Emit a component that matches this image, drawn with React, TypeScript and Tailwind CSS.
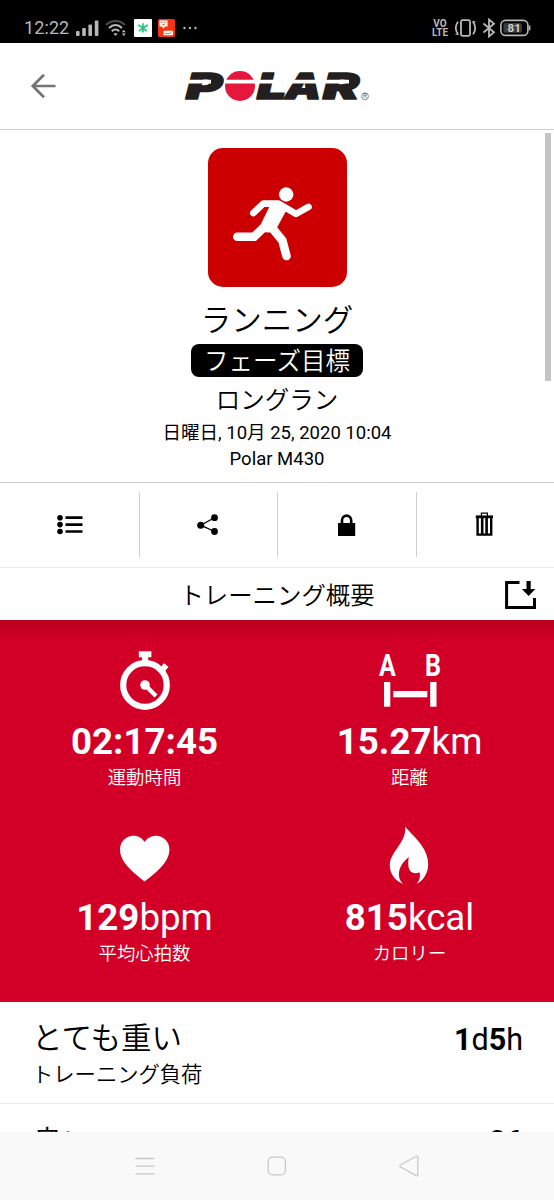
import React from 'react';

interface MetricProps {
  icon: React.ReactNode;
  value: string;
  unit?: string;
  label: string;
}

const StatusBar: React.FC = () => (
  <div className="flex h-[43px] shrink-0 items-start justify-between bg-black pt-[17px] pr-[23px] pl-[24px] text-[#b8b8b8]">
    <div className="flex h-[22px] items-center">
      <span className="w-[52px] text-[18px] leading-[22px] tracking-[0.1px]">12:22</span>
      <svg width="23" height="16" viewBox="0 0 23 16" fill="currentColor">
        <rect x="0" y="11" width="3.6" height="5" rx="1" />
        <rect x="6.2" y="8" width="3.6" height="8" rx="1" />
        <rect x="12.4" y="4.5" width="3.6" height="11.5" rx="1" />
        <rect x="18.8" y="0.5" width="3.6" height="15.5" rx="1" />
      </svg>
      <svg className="ml-[6px]" width="22" height="18" viewBox="0 0 22 18" fill="none" stroke="currentColor" strokeWidth="2">
        <path d="M1 6C6 0.5 15 0.5 20 6" stroke="#4a4a4a" />
        <path d="M4 9C8 5 13 5 17 9" />
        <path d="M6.8 12.2C9 10 12 10 14.2 12.2" />
        <path d="M8.3 14.2H12.7L10.5 17Z" fill="currentColor" stroke="none" />
        <path d="M16.8 13.2L18.8 10.8L20.8 13.2ZM16.8 14.5H20.8L18.8 17Z" fill="currentColor" stroke="none" />
      </svg>
      <svg className="ml-[7px]" width="18" height="18" viewBox="0 0 18 18">
        <rect width="18" height="18" rx="1" fill="#fff" />
        <path d="M9 4.2V9M4.2 6L9 9L13.8 6M5.2 12.2L9 9L12.8 12.2M9 9V13.5" fill="none" stroke="#1fc97c" strokeWidth="1.7" />
      </svg>
      <svg className="ml-[6px]" width="17" height="18" viewBox="0 0 17 18">
        <rect width="17" height="18" rx="1.5" fill="#f8330f" />
        <path d="M1.5 1.5H9.5V7.5H7L5.5 9.5L4 7.5H1.5Z" fill="#fff" />
        <path d="M3.4 3.4H4.6M6.4 3.4H7.6M4.5 5.7H6.5" stroke="#f8330f" strokeWidth="1" />
        <rect x="5.5" y="11.7" width="9.5" height="4.6" rx="1" fill="#fff" />
        <path d="M7 14.7H11L13 13.5" fill="none" stroke="#f8330f" strokeWidth="0.8" />
      </svg>
      <svg className="ml-[8px]" width="14" height="4" viewBox="0 0 14 4" fill="currentColor">
        <circle cx="1.5" cy="2" r="1.2" />
        <circle cx="7" cy="2" r="1.2" />
        <circle cx="12.5" cy="2" r="1.2" />
      </svg>
    </div>

    <div className="flex h-[22px] items-center">
      <div className="flex w-[18px] flex-col items-center text-[10px] leading-[9.5px] font-bold">
        <span>VO</span>
        <span>LTE</span>
      </div>
      <svg className="ml-[5px]" width="23" height="18" viewBox="0 0 23 18" fill="none" stroke="currentColor" strokeWidth="1.8">
        <rect x="7" y="1.2" width="9" height="15.6" rx="1.5" />
        <path d="M4 2.8C1 6.5 1 11.5 4 14.8M19 3.2C22 6.5 22 11.5 19 15.2" />
        <path d="M4.6 15.6L1.6 14.8M18.4 2.4L21.4 3.2" strokeWidth="1.2" />
      </svg>
      <svg className="ml-[5px]" width="14" height="20" viewBox="0 0 14 20" fill="none" stroke="currentColor" strokeWidth="1.8">
        <path d="M1.5 5.5L12 14.3L7 18.5V1.5L12 5.7L1.5 14.5" />
      </svg>
      <svg className="ml-[4px]" width="31" height="18" viewBox="0 0 31 18">
        <rect x="0.9" y="1.4" width="27" height="15" rx="4.5" fill="none" stroke="currentColor" strokeWidth="1.6" />
        <rect x="3.4" y="4" width="18.5" height="9.8" rx="2" fill="#3c3c3c" />
        <path d="M29.6 6.5V11.3" stroke="currentColor" strokeWidth="1.6" />
        <text x="14.2" y="13" textAnchor="middle" fontSize="11.5" fontWeight="700" fill="#d0d0d0">81</text>
      </svg>
    </div>
  </div>
);

const PolarLogo: React.FC = () => (
  <svg width="186" height="60" viewBox="0 -13 186 60" className="font-[Inter,sans-serif]">
    <g
      fill="#231f20"
      stroke="#231f20"
      strokeWidth="1.6"
      strokeLinejoin="round"
      fontSize="36"
      fontWeight="900"
      fontStyle="italic"
    >
      <text x="2" y="30.3" textLength="36" lengthAdjust="spacingAndGlyphs">P</text>
      <text x="73" y="30.3" textLength="29" lengthAdjust="spacingAndGlyphs">L</text>
      <text x="101" y="30.3" textLength="36" lengthAdjust="spacingAndGlyphs">A</text>
      <text x="139" y="30.3" textLength="36" lengthAdjust="spacingAndGlyphs">R</text>
    </g>
    <circle cx="56" cy="17" r="15" fill="#e6173c" />
    <path d="M0 12.6H27M40 12.6H134M136 12.6H165" stroke="#fff" strokeWidth="3.8" />
    <circle cx="181" cy="27.3" r="3.4" fill="none" stroke="#555" strokeWidth="0.7" />
    <text x="181" y="29.3" textAnchor="middle" fontSize="5.5" fill="#444">R</text>
  </svg>
);

const Header: React.FC = () => (
  <header className="grid h-[87px] shrink-0 grid-cols-[1fr_186px_1fr] items-center border-b border-[#cfcfcf]">
    <svg className="ml-[30px]" width="27" height="26" viewBox="0 0 27 26" fill="none" stroke="#747474" strokeWidth="2.7">
      <path d="M25.5 13H3M14 1.8L2.8 13L14 24.2" />
    </svg>
    <PolarLogo />
  </header>
);

const RunnerIcon: React.FC = () => (
  <svg width="138" height="138" viewBox="0 0 138 138" fill="none" stroke="#fff" strokeLinecap="round">
    <circle cx="78.2" cy="46.5" r="7.2" fill="#fff" stroke="none" />
    <path d="M45.3 65L55.3 55.6H70.5L88 65.8L100.5 58.9" strokeWidth="6.6" strokeLinejoin="round" />
    <path d="M62 57.5L53.7 74.5L52 84L61.5 84.5L68.8 80L78 63L71 53Z" fill="#fff" stroke="none" />
    <path d="M29.3 88.7H46.2L57 78.2" strokeWidth="8.6" />
    <path d="M65 81L74.4 92.5L78.5 108" strokeWidth="8.6" />
  </svg>
);

const Summary: React.FC = () => (
  <section className="flex h-[353px] shrink-0 flex-col items-center border-b border-[#cfcfcf] pt-[18px] font-[350]">
    <div className="h-[139px] w-[139px] shrink-0 overflow-hidden rounded-[15px] bg-[#cc0000]">
      <RunnerIcon />
    </div>
    <h1 className="mt-[16px] text-[30.5px] leading-[36px]">ランニング</h1>
    <div className="mt-[5px] flex h-[33px] w-[172px] items-center justify-center rounded-[8px] bg-black pt-[2px] text-[24.5px] leading-[32px] text-white">
      フェーズ目標
    </div>
    <p className="mt-[8px] text-[24.5px] leading-[32px]">ロングラン</p>
    <p className="mt-[4px] text-[18.5px] leading-[25px] font-normal">日曜日, 10月 25, 2020 10:04</p>
    <p className="text-[18.5px] leading-[26px] font-normal">Polar M430</p>
  </section>
);

const toolbarIcons = [
  <svg key="list" width="32" height="32" viewBox="0 0 32 32">
    <path d="M12.5 8.7H29.5M12.5 15.6H29.5M12.5 22.5H29.5" stroke="#000" strokeWidth="2.7" />
    <circle cx="7" cy="8.7" r="2.8" />
    <circle cx="7" cy="15.6" r="2.8" />
    <circle cx="7" cy="22.5" r="2.8" />
  </svg>,
  <svg key="share" width="32" height="32" viewBox="0 0 32 32">
    <path d="M22.5 8.7L8.7 16.2L22.5 22.5" fill="none" stroke="#000" strokeWidth="1.3" />
    <circle cx="8.7" cy="16.2" r="3.5" />
    <circle cx="22.5" cy="8.7" r="3.4" />
    <circle cx="22.5" cy="22.5" r="3.4" />
  </svg>,
  <svg key="lock" width="32" height="32" viewBox="0 0 32 32">
    <rect x="7" y="14" width="17.2" height="13" />
    <path d="M11 15V11.5C11 5 20.2 5 20.2 11.5V15" fill="none" stroke="#000" strokeWidth="2.6" />
  </svg>,
  <svg key="trash" width="32" height="32" viewBox="0 0 32 32" fill="none" stroke="#000">
    <path d="M6.8 7.8H24" strokeWidth="2.8" />
    <path d="M12.4 7V4.2H18.4V7" strokeWidth="1.2" />
    <path d="M8.6 8V25.6H22.2V8" strokeWidth="2.4" />
    <path d="M13.2 8V25M17.6 8V25" strokeWidth="2.6" />
  </svg>,
];

const Toolbar: React.FC = () => (
  <div className="grid h-[85px] shrink-0 grid-cols-4 border-b border-[#ebebeb] pt-[9px] pb-[10px]">
    {toolbarIcons.map((icon, i) => (
      <div key={i} className={`flex items-center justify-center ${i > 0 ? 'border-l border-[#cfcfcf]' : ''}`}>
        {icon}
      </div>
    ))}
  </div>
);

const StopwatchIcon = (
  <svg width="80" height="72" viewBox="0 0 80 72" fill="none" stroke="#fff">
    <circle cx="40" cy="41" r="21.8" strokeWidth="6.2" />
    <path d="M33.8 10.3H46.4" strokeWidth="6" />
    <path d="M40.1 12V20" strokeWidth="6.2" />
    <path d="M56 27.5L61.2 21" strokeWidth="6" />
    <path d="M40 41L51 52" strokeWidth="4.2" />
    <circle cx="40" cy="41" r="4.8" fill="#fff" stroke="none" />
  </svg>
);

const DistanceIcon = (
  <svg width="80" height="72" viewBox="0 0 80 72" fill="#fff">
    <text x="9" y="32" fontSize="31" fontWeight="700" textLength="16.8" lengthAdjust="spacingAndGlyphs">A</text>
    <text x="55" y="32" fontSize="31" fontWeight="700" textLength="16" lengthAdjust="spacingAndGlyphs">B</text>
    <rect x="14" y="38" width="6.3" height="24.7" />
    <rect x="60.2" y="38" width="6.3" height="24.7" />
    <rect x="23.3" y="47" width="34" height="6.3" />
  </svg>
);

const HeartIcon = (
  <svg width="80" height="72" viewBox="0 0 80 72" fill="#fff">
    <path d="M39.6 61.5C30 53.5 15 43 15 29.5C15 21 21.5 15.7 28.5 15.7C33.5 15.7 37.4 18 39.6 22C41.8 18 46.5 15.7 51 15.7C58 15.7 64.4 21 64.4 29.5C64.4 43 49.6 53.5 39.6 61.5Z" />
  </svg>
);

const FlameIcon = (
  <svg width="80" height="72" viewBox="0 0 80 72" fill="#fff">
    <path d="M35.2 6.7C42 15 58.2 27 58.2 44C58.2 53 53.5 60.5 46.5 64C49.3 61 50.7 57 49.5 52.2C43 55.5 36 51.5 38.8 37C32.5 42 28.9 48 28.9 54.5C28.9 58.5 30.5 61.5 33.2 63.9C24.5 60.5 19.8 53.5 19.8 45C19.8 32 37 22 35.2 6.7Z" />
  </svg>
);

const Metric: React.FC<MetricProps> = ({ icon, value, unit, label }) => (
  <div className="flex h-[176px] flex-col items-center text-white">
    {icon}
    <p className="mt-px text-[36.7px] leading-[50px] font-bold">
      {value}
      {unit && <span className="font-normal">{unit}</span>}
    </p>
    <p className="text-[18.4px] leading-[22px] font-[350]">{label}</p>
  </div>
);

const App: React.FC = () => (
  <div
    lang="ja"
    className="relative flex h-[1200px] w-[554px] flex-col overflow-hidden bg-white font-[Roboto,'Noto_Sans_CJK_JP',sans-serif] text-black"
  >
    <StatusBar />
    <Header />
    <Summary />
    <Toolbar />

    <div className="grid h-[52px] shrink-0 grid-cols-[1fr_auto_1fr] items-center pt-[2px]">
      <h2 className="col-start-2 pt-[2px] text-[24.4px] leading-[36px] font-[350]">トレーニング概要</h2>
      <svg className="mr-[17px] justify-self-end" width="33" height="30" viewBox="0 0 33 30">
        <path d="M15.5 2.6H2.6V27.4H30.5V18" fill="none" stroke="#000" strokeWidth="3" />
        <path d="M22.5 1H26.7V9H31.3L24.6 16L17.9 9H22.5Z" />
      </svg>
    </div>

    <section className="grid h-[382px] shrink-0 grid-cols-2 content-start bg-[#d20026] bg-[linear-gradient(to_bottom,#b9001f_0px,#c60022_9px,#d20026_22px)] px-[12px] pt-[24px]">
      <Metric icon={StopwatchIcon} value="02:17:45" label="運動時間" />
      <Metric icon={DistanceIcon} value="15.27" unit="km" label="距離" />
      <Metric icon={HeartIcon} value="129" unit="bpm" label="平均心拍数" />
      <Metric icon={FlameIcon} value="815" unit="kcal" label="カロリー" />
    </section>

    <section className="flex min-h-0 flex-1 flex-col overflow-hidden">
      <div className="flex h-[102px] shrink-0 justify-between border-b border-[#ebebeb] pt-[17px] pr-[31px] pl-[32px]">
        <div>
          <p className="text-[30.5px] leading-[40px] font-[350]">とても重い</p>
          <p className="text-[21.3px] leading-[32px] font-[350]">トレーニング負荷</p>
        </div>
        <p className="text-[30.5px] leading-[41px] font-bold">
          1<span className="font-normal">d</span>5<span className="font-normal">h</span>
        </p>
      </div>
      <div className="flex justify-between pt-[19px] pr-[31px] pl-[32px] text-[30.5px]">
        <p className="leading-[40px] font-[350]">良い</p>
        <p className="leading-[37px]">26</p>
      </div>
    </section>

    <nav className="flex h-[68px] shrink-0 items-center bg-[#f9f9f9] pr-[21px] pl-[23px]">
      <div className="flex flex-1 justify-center">
        <svg width="20" height="20" viewBox="0 0 20 20" stroke="#c9c9c9" strokeWidth="1.3">
          <path d="M0.5 2.5H19.5M0.5 10.2H19.5M0.5 17.8H19.5" />
        </svg>
      </div>
      <svg width="20" height="20" viewBox="0 0 20 20" fill="none" stroke="#c9c9c9" strokeWidth="1.3">
        <rect x="1.2" y="1.2" width="17.2" height="17.6" rx="4" />
      </svg>
      <div className="flex flex-1 justify-center pr-[2px]">
        <svg width="20" height="22" viewBox="0 0 20 22" fill="none" stroke="#c9c9c9" strokeWidth="1.3">
          <path d="M17.2 1.3Q18.8 0.8 18.8 2.5V19.5Q18.8 21.2 17.2 20.6L1.5 12Q0 11 1.5 10Z" />
        </svg>
      </div>
    </nav>

    <div className="absolute top-[133px] right-[3px] h-[248px] w-[6px] bg-[#c4c4c4]" />
  </div>
);

export default App;
